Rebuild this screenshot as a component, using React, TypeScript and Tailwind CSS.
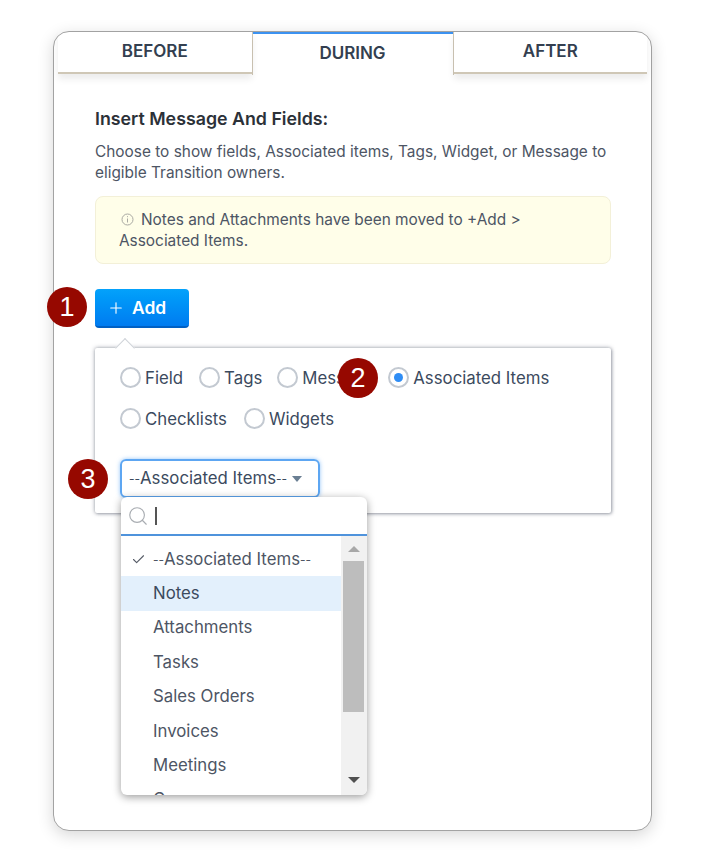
import { Check, Plus, Search } from "lucide-react";

const font = { fontFamily: '"Inter", "Noto Sans", sans-serif' };

type BadgeProps = {
  n: number;
  className: string;
};

function Badge({ n, className }: BadgeProps) {
  return (
    <span
      className={`absolute flex h-10 w-10 items-center justify-center rounded-full bg-[#960800] text-[27px] leading-none text-white [font-family:'Liberation_Sans',sans-serif] ${className}`}
    >
      {n}
    </span>
  );
}

function Radio({ label, checked = false }: { label: string; checked?: boolean }) {
  return (
    <label className="flex items-center gap-[4px] text-[16.8px] leading-5 text-[#3b4a5e]">
      <span className="flex h-[21px] w-[21px] items-center justify-center rounded-full border-2 border-[#c3c9d1] bg-white">
        {checked ? <span className="h-[9px] w-[9px] rounded-full bg-[#2f8df5]" /> : null}
      </span>
      {label}
    </label>
  );
}

function Tab({ label, active = false }: { label: string; active?: boolean }) {
  if (active) {
    return (
      <div className="flex h-[43px] w-[200px] items-center justify-center border-t-2 border-[#3b92f1] pb-[2px] text-[17px] font-semibold text-[#333f50]">
        {label}
      </div>
    );
  }
  return (
    <div className="flex h-[42px] flex-1 items-center justify-center border-b-2 border-[#cfc7b6] text-[17px] font-semibold text-[#333f50] shadow-[0_5px_7px_rgba(0,0,0,0.08)]">
      {label}
    </div>
  );
}

// the dashes run narrower in the reference than in Inter
function DashLabel() {
  return (
    <span>
      <span className="inline-block -translate-y-px text-[12px]">--</span>
      Associated Items
      <span className="inline-block -translate-y-px text-[12px]">--</span>
    </span>
  );
}

const items = ["Notes", "Attachments", "Tasks", "Sales Orders", "Invoices", "Meetings"];

export default function App() {
  return (
    <div className="h-[863px] w-[704px] bg-white pl-[53px] pt-[31px]" style={font}>
      <div className="h-[800px] w-[599px] rounded-[16px] border border-[#a3a3a3] bg-white px-[4px] shadow-[0_4px_16px_rgba(0,0,0,0.16)]">
        <div className="flex">
          <div className="flex flex-1 border-r border-[#cfc7b6]">
            <Tab label="BEFORE" />
          </div>
          <Tab label="DURING" active />
          <div className="flex flex-1 border-l border-[#cfc7b6]">
            <Tab label="AFTER" />
          </div>
        </div>

        <div className="w-[516px] pl-[37px] pt-[32px]">
          <h2 className="text-[17.8px] font-semibold leading-6 text-[#2c3138]">Insert Message And Fields:</h2>
          <p className="mt-[10px] w-[516px] text-[15.4px] leading-[21px] text-[#4d5564]">
            Choose to show fields, Associated items, Tags, Widget, or Message to eligible Transition owners.
          </p>

          <div className="mt-[13px] h-[68px] w-[516px] rounded-[8px] border border-[#f3f0d8] bg-[#fffee9] pl-[23px] pr-[80px] pt-[12px] text-[15.4px] leading-[21px] text-[#4d5564]">
            <svg className="mb-[2px] ml-[2px] mr-[7px] inline-block h-[13px] w-[13px]" viewBox="0 0 13 13" fill="none" stroke="#a9a9a3">
              <circle cx="6.5" cy="6.5" r="5.5" />
              <path d="M6.5 5.5v4M6.5 3.2v1" />
            </svg>
            Notes and Attachments have been moved to +Add &gt; Associated Items.
          </div>

          <div className="relative mt-[25px] w-fit">
            <button
              type="button"
              className="flex h-[39px] w-[94px] items-center gap-[7px] rounded-[4px] border-b-2 border-[#0060c4] bg-gradient-to-b from-[#04a2fb] to-[#007bf0] pl-[12px] pt-[1px] text-[17.4px] font-semibold text-white"
            >
              <Plus size={18} strokeWidth={1.5} />
              Add
            </button>
            <Badge n={1} className="left-[-48px] top-[-2px]" />
          </div>

          <div className="relative mt-[20px] h-[165px] w-[516px] rounded-[2px] bg-white pl-[25px] pt-[19px] shadow-[0_0_4px_rgba(50,60,80,0.5),1px_1px_3px_rgba(50,60,80,0.25)]">
            <span className="absolute left-[23px] top-[-7px] h-[14px] w-[14px] rotate-45 border-l border-t border-[#cfd3d9] bg-white" />
            <div className="flex items-center">
              <Radio label="Field" />
              <span className="w-[16px]" />
              <Radio label="Tags" />
              <span className="w-[15px]" />
              <div className="w-[111px]">
                <Radio label="Message" />
              </div>
              <Radio label="Associated Items" checked />
            </div>
            <div className="mt-[20px] flex items-center gap-[17px]">
              <Radio label="Checklists" />
              <Radio label="Widgets" />
            </div>
            <div className="mt-[30px] flex h-[39px] w-[200px] items-center rounded-[6px] border-2 border-[#5da6f2] pl-[7px] text-[16.8px] text-[#3b4a5e] shadow-[0_0_4px_rgba(80,160,245,0.6)]">
              <DashLabel />
              <span className="ml-[5px] h-0 w-0 border-x-[5px] border-t-[6px] border-x-transparent border-t-[#6a7f93]" />
            </div>
            <Badge n={2} className="left-[243px] top-[10px]" />
            <Badge n={3} className="left-[-27px] top-[111px]" />

            <div className="absolute left-[26px] top-[149px] z-10 h-[298px] w-[246px] overflow-hidden rounded-[6px] bg-white shadow-[0_2px_8px_rgba(0,0,0,0.4)]">
              <div className="flex h-[39px] items-center border-b-2 border-[#4f93dc] pl-[6px]">
                <Search size={22} strokeWidth={1.25} className="text-[#a9adb2]" />
                <span className="ml-[6px] h-[18px] w-[1.5px] bg-[#555]" />
              </div>
              <div className="flex">
                <div className="h-[260px] flex-1 overflow-hidden pt-[6px] text-[16.8px] text-[#4d5564]">
                  <div className="relative flex h-[34.4px] items-center pl-[32px]">
                    <Check size={15} strokeWidth={1.75} className="absolute left-[10px] text-[#555b66]" />
                    <DashLabel />
                  </div>
                  {items.map((item) => (
                    <div
                      key={item}
                      className={`flex h-[34.4px] items-center pl-[32px] ${item === "Notes" ? "bg-[#e3f0fc] text-[#3b4a5e]" : ""}`}
                    >
                      {item}
                    </div>
                  ))}
                  <div className="flex h-[34.4px] items-center pl-[32px]">Cases</div>
                </div>
                <div className="relative h-[260px] w-[26px] bg-[#f1f1f1]">
                  <span className="absolute left-[7px] top-[10px] h-0 w-0 border-x-[6px] border-b-[6px] border-x-transparent border-b-[#a8a8a8]" />
                  <span className="absolute left-[2px] top-[25px] h-[151px] w-[21px] bg-[#bdbdbd]" />
                  <span className="absolute left-[7px] top-[241px] h-0 w-0 border-x-[6px] border-t-[6px] border-x-transparent border-t-[#505050]" />
                </div>
              </div>
            </div>
          </div>
        </div>
      </div>
    </div>
  );
}
